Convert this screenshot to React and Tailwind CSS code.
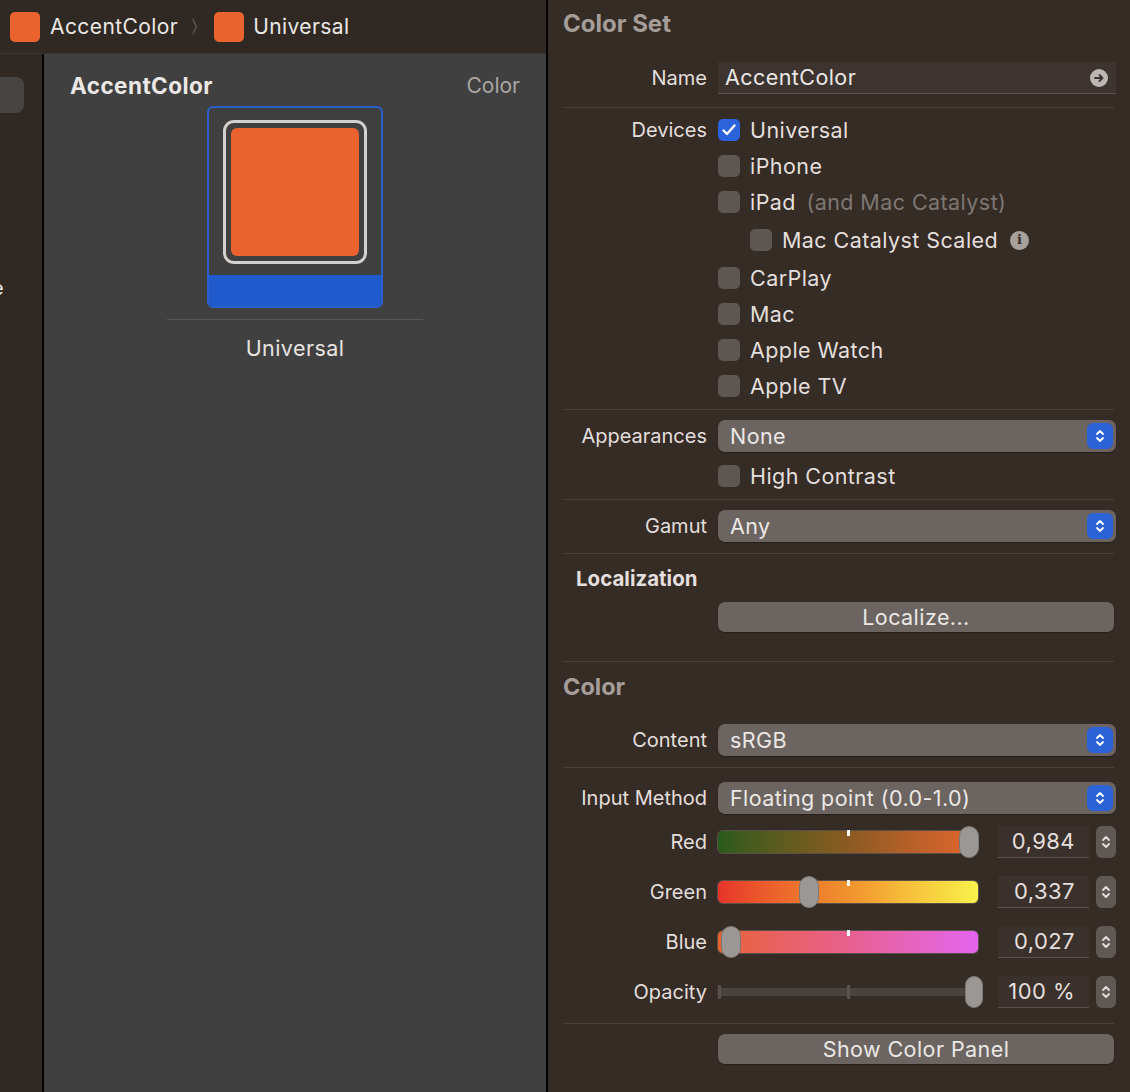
import React from "react";

const ctl = "text-[21.5px] tracking-[0.02em]";

const Chevrons = ({ color = "white" }) => (
  <svg width="12" height="18" viewBox="0 0 12 18" fill="none">
    <path d="M3 7 L6 4 L9 7" stroke={color} strokeWidth="1.8" strokeLinecap="round" strokeLinejoin="round" />
    <path d="M3 11 L6 14 L9 11" stroke={color} strokeWidth="1.8" strokeLinecap="round" strokeLinejoin="round" />
  </svg>
);

const Separator = ({ className = "" }) => <div className={"h-px bg-[#4a413b] " + className} />;

const Label = ({ children }) => (
  <div className="w-[144px] shrink-0 text-right text-[20px] text-[#e4dfdc]">{children}</div>
);

const Row = ({ label, className = "", children }) => (
  <div className={"flex items-center gap-[11px] " + className}>
    <Label>{label}</Label>
    <div className="flex-1 flex items-center">{children}</div>
  </div>
);

const Checkbox = ({ checked }) =>
  checked ? (
    <div className="w-[22px] h-[22px] rounded-[5px] bg-[#2b63dc] flex items-center justify-center shrink-0">
      <svg width="16" height="14" viewBox="0 0 16 14" fill="none">
        <path d="M2.5 7.5 L6 11 L13.5 2.5" stroke="white" strokeWidth="2.4" strokeLinecap="round" strokeLinejoin="round" />
      </svg>
    </div>
  ) : (
    <div className="w-[22px] h-[22px] rounded-[5px] bg-[#5d5653] shrink-0" />
  );

const Check = ({ checked, children, indent }) => (
  <div className={"flex items-center gap-[10px] " + (indent ? "pl-[32px]" : "")}>
    <Checkbox checked={checked} />
    <span className={ctl + " text-[#e4dfdc]"}>{children}</span>
  </div>
);

const Popup = ({ value }) => (
  <div className="flex-1 h-[32px] rounded-[7px] bg-[#6b6461] flex items-center justify-between pl-[12px] pr-[3px] shadow-[0_1px_1px_rgba(0,0,0,0.3)]">
    <span className={ctl + " text-[#ece8e5]"}>{value}</span>
    <div className="w-[26px] h-[26px] rounded-[6px] bg-[#2b62d6] flex items-center justify-center">
      <Chevrons />
    </div>
  </div>
);

const Button = ({ children }) => (
  <div className={"flex-1 h-[30px] rounded-[7px] bg-[#6b6461] flex items-center justify-center text-[#ece8e5] shadow-[0_1px_1px_rgba(0,0,0,0.3)] " + ctl}>
    {children}
  </div>
);

const Stepper = () => (
  <div className="w-[20px] h-[32px] rounded-[6px] bg-[#5f5855] flex items-center justify-center ml-[7px]">
    <Chevrons color="#e4dfdc" />
  </div>
);

const NumberField = ({ value }) => (
  <div className="w-[91px] h-[32px] bg-[#3a312c] border-b border-[#5a524e] flex items-center justify-end pr-[14px] text-[22px] tracking-[0.02em] text-[#e4dfdc]">
    {value}
  </div>
);

const sliders = [
  { label: "Red", value: "0,984", pos: 0.962, grad: "bg-linear-to-r from-[#285a1c] via-[#8a5a22] to-[#e6652f]" },
  { label: "Green", value: "0,337", pos: 0.35, grad: "bg-linear-to-r from-[#e6322a] via-[#f0922e] to-[#f8f24a]" },
  { label: "Blue", value: "0,027", pos: 0.055, grad: "bg-linear-to-r from-[#e8622c] via-[#e8608e] to-[#e463ef]" },
];

const ColorSlider = ({ s }) => (
  <div className="relative w-[262px] h-[32px] flex items-center">
    <div className={"w-full h-[24px] rounded-[6px] border border-[#5a504b] " + s.grad} />
    <div className="absolute left-[130px] top-[4px] w-[3px] h-[6px] bg-white" />
    <div
      className="absolute top-0 w-[20px] h-[32px] rounded-full bg-[#9b9795] border border-[#7d7875]"
      style={{ left: `calc(${s.pos * 100}% - 10px)` }}
    />
  </div>
);

const OpacitySlider = () => (
  <div className="relative w-[262px] h-[32px] flex items-center">
    <div className="w-full h-[8px] bg-[#4a423e] rounded-[2px]" />
    <div className="absolute left-[1px] top-[9px] w-[3px] h-[14px] bg-[#5a524e]" />
    <div className="absolute left-[130px] top-[9px] w-[3px] h-[14px] bg-[#5a524e]" />
    <div className="absolute -right-[4px] top-0 w-[18px] h-[32px] rounded-full bg-[#9b9795] border border-[#7d7875]" />
  </div>
);

export default function App() {
  return (
    <div className="flex w-[1130px] h-[1092px] overflow-hidden font-['Inter','Noto_Sans',sans-serif] bg-[#352c26]">
      {/* left: editor */}
      <div className="w-[546px] flex flex-col shrink-0">
        <div className="h-[54px] bg-[#2f2823] border-b border-[#3a3430] flex items-center pl-[10px]">
          <div className="w-[30px] h-[30px] rounded-[5px] bg-[#ea632e]" />
          <span className="ml-[10px] text-[21px] tracking-[0.02em] text-[#ece8e5]">AccentColor</span>
          <span className="ml-[12px] text-[18px] text-[#8a837f]">〉</span>
          <div className="ml-[6px] w-[30px] h-[30px] rounded-[5px] bg-[#ea632e]" />
          <span className="ml-[9px] text-[21px] tracking-[0.02em] text-[#ece8e5]">Universal</span>
        </div>
        <div className="flex flex-1">
          <div className="w-[44px] bg-[#2f2823] border-r-2 border-black overflow-hidden flex flex-col">
            <div className="mt-[23px] w-[24px] h-[36px] rounded-r-[8px] bg-[#474543]" />
            <div className="mt-[160px] -ml-[8px] text-[20px] text-[#ece8e5]">e</div>
          </div>
          <div className="flex-1 bg-[#404040] flex flex-col">
            <div className="flex items-center justify-between pl-[26px] pr-[26px] mt-[19px] h-[26px]">
              <span className="text-[22.5px] tracking-[0.02em] font-bold text-[#ece8e5]">AccentColor</span>
              <span className="text-[21px] text-[#aaa6a3]">Color</span>
            </div>
            <div className="self-center mt-[7px] w-[176px] h-[202px] rounded-[6px] border-2 border-[#2c5fca] overflow-hidden flex flex-col">
              <div className="flex-1 flex items-center justify-center">
                <div className="w-[144px] h-[144px] rounded-[11px] border-[3px] border-[#d4d0ce] p-[5px]">
                  <div className="w-full h-full rounded-[6px] bg-[#ea632e]" />
                </div>
              </div>
              <div className="h-[31px] bg-[#1f5bcc]" />
            </div>
            <div className="self-center mt-[11px] w-[256px] h-px bg-[#575757]" />
            <div className={"self-center mt-[12px] text-[#e8e4e2] " + ctl}>Universal</div>
          </div>
        </div>
      </div>
      <div className="w-[2px] bg-black shrink-0" />

      {/* right: inspector */}
      <div className="flex-1 bg-[#352c26] pl-[15px] pr-[15px] flex flex-col">
        <div className="h-[48px] flex items-center text-[24px] font-bold text-[#a59d98]">Color Set</div>

        <Row label="Name" className="mt-[14px] h-[32px]">
          <div className="flex-1 h-[32px] bg-[#3d3430] border-b border-[#5a524e] flex items-center justify-between pl-[7px] pr-[8px]">
            <span className={ctl + " text-[#ece8e5]"}>AccentColor</span>
            <div className="w-[18px] h-[18px] rounded-full bg-[#bcb7b4] flex items-center justify-center">
              <svg width="12" height="12" viewBox="0 0 12 12" fill="none">
                <path d="M2 6 H9.5 M6.5 3 L9.5 6 L6.5 9" stroke="#3a322d" strokeWidth="1.8" strokeLinecap="round" strokeLinejoin="round" />
              </svg>
            </div>
          </div>
        </Row>
        <Separator className="mt-[13px] mr-[2px]" />

        <div className="flex gap-[11px] mt-[4px]">
          <div className="w-[144px] shrink-0 h-[36px] flex items-center justify-end text-[20px] text-[#e4dfdc]">Devices</div>
          <div className="flex flex-col">
            <div className="h-[36px] flex items-center"><Check checked>Universal</Check></div>
            <div className="h-[36px] flex items-center"><Check>iPhone</Check></div>
            <div className="h-[36px] flex items-center">
              <Check>
                iPad <span className="ml-[4px] text-[#7e7773]">(and Mac Catalyst)</span>
              </Check>
            </div>
            <div className="h-[40px] flex items-center">
              <Check indent>Mac Catalyst Scaled</Check>
              <div className="ml-[12px] w-[19px] h-[19px] rounded-full bg-[#a7a19e] flex items-center justify-center text-[13px] font-bold text-[#352c26] font-['DejaVu_Serif',serif]">
                i
              </div>
            </div>
            <div className="h-[36px] flex items-center"><Check>CarPlay</Check></div>
            <div className="h-[36px] flex items-center"><Check>Mac</Check></div>
            <div className="h-[36px] flex items-center"><Check>Apple Watch</Check></div>
            <div className="h-[36px] flex items-center"><Check>Apple TV</Check></div>
          </div>
        </div>
        <Separator className="mt-[5px] mr-[2px]" />

        <Row label="Appearances" className="mt-[10px] h-[32px]">
          <Popup value="None" />
        </Row>
        <div className="flex gap-[11px] h-[36px] items-center mt-[6px]">
          <div className="w-[144px] shrink-0" />
          <Check>High Contrast</Check>
        </div>
        <Separator className="mt-[5px] mr-[2px]" />

        <Row label="Gamut" className="mt-[10px] h-[32px]">
          <Popup value="Any" />
        </Row>
        <Separator className="mt-[11px] mr-[2px]" />

        <div className="mt-[11px] h-[28px] flex items-center pl-[13px] text-[20.5px] font-bold text-[#e4dfdc]">Localization</div>
        <Row label="" className="mt-[9px] h-[30px] pr-[2px]">
          <Button>Localize...</Button>
        </Row>
        <Separator className="mt-[29px] mr-[2px]" />

        <div className="mt-[11px] h-[28px] flex items-center text-[23.5px] font-bold text-[#a59d98]">Color</div>
        <Row label="Content" className="mt-[24px] h-[30px]">
          <Popup value="sRGB" />
        </Row>
        <Separator className="mt-[12px] mr-[2px]" />

        <Row label="Input Method" className="mt-[15px] h-[30px]">
          <Popup value="Floating point (0.0-1.0)" />
        </Row>

        {sliders.map((s, i) => (
          <div key={s.label} className={"flex items-center gap-[10px] h-[32px] " + (i === 0 ? "mt-[13px]" : "mt-[18px]")}>
            <Label>{s.label}</Label>
            <ColorSlider s={s} />
            <div className="ml-[9px] flex items-center">
              <NumberField value={s.value} />
              <Stepper />
            </div>
          </div>
        ))}
        <div className="flex items-center gap-[10px] h-[32px] mt-[18px]">
          <Label>Opacity</Label>
          <OpacitySlider />
          <div className="ml-[9px] flex items-center">
            <NumberField value="100 %" />
            <Stepper />
          </div>
        </div>
        <Separator className="mt-[15px] mr-[2px]" />

        <Row label="" className="mt-[10px] h-[30px] pr-[2px]">
          <Button>Show Color Panel</Button>
        </Row>
      </div>
    </div>
  );
}
